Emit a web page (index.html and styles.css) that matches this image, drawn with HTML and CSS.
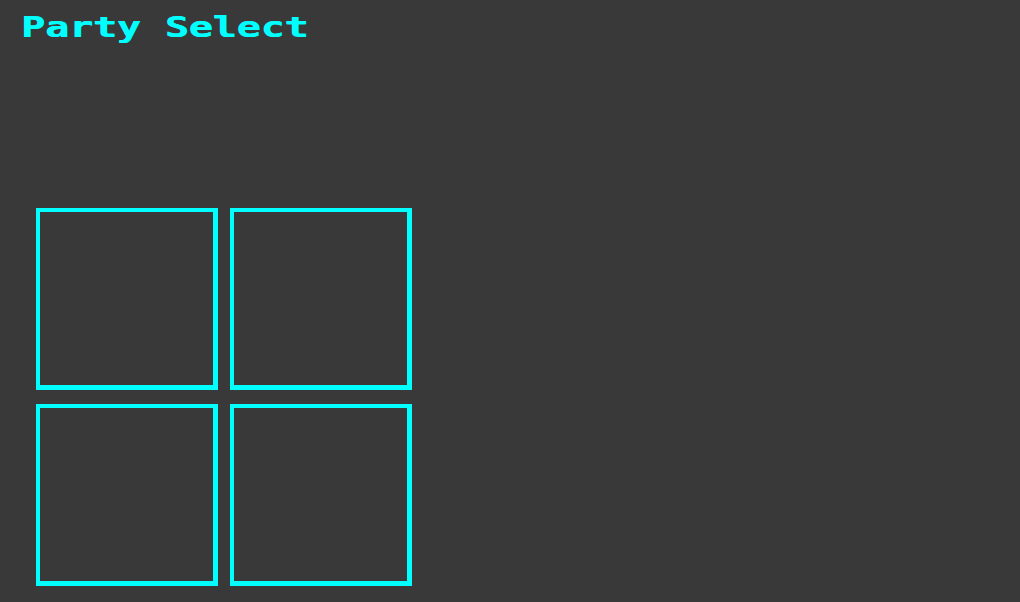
FILE: index.html
```html
<!DOCTYPE html>
<html>
<head>
<meta charset="utf-8">
<link rel="stylesheet" href="styles.css">
</head>
<body>
<div class="screen">
  <h1 class="title">Party Select</h1>
  <div class="party">
    <div class="slot"></div>
    <div class="slot"></div>
    <div class="slot"></div>
    <div class="slot"></div>
  </div>
</div>
</body>
</html>
```
FILE: styles.css
```css
html, body {
  margin: 0;
  padding: 0;
  background: #393939;
  width: 1020px;
  height: 602px;
  overflow: hidden;
}
.screen {
  display: flex;
  flex-direction: column;
  align-items: flex-start;
  padding: 0 0 0 21px;
}
.title {
  margin: 0;
  height: 44px;
  font-family: "DejaVu Sans Mono", monospace;
  font-weight: bold;
  font-size: 28px;
  line-height: 55px;
  color: #00ffff;
  text-shadow: 0.6px 0 0 #00ffff;
  transform: scaleX(1.42);
  transform-origin: left center;
  white-space: nowrap;
}
.party {
  display: grid;
  grid-template-columns: 182px 182px;
  grid-auto-rows: 182px;
  column-gap: 12px;
  row-gap: 14px;
  margin: 164px 0 0 15px;
}
.slot {
  border-style: solid;
  border-color: #00ffff;
  border-width: 4px 5px 5px 4px;
  box-sizing: border-box;
}
```
